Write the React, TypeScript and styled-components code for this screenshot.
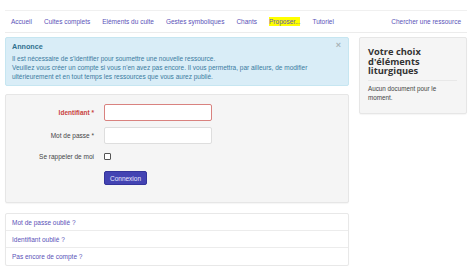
import React from "react";
import styled, { createGlobalStyle } from "styled-components";

const Global = createGlobalStyle`
  html, body { margin: 0; padding: 0; background: #fff; }
  body { font-family: "Liberation Sans", Arial, sans-serif; color: #333; }
  * { box-sizing: border-box; }
`;

const Page = styled.div`
  width: 473px;
  padding: 10px 6px 0 5px;
`;

const Nav = styled.nav`
  display: flex;
  align-items: center;
  height: 23px;
  border-top: 1px solid #f0f0f0;
  border-bottom: 1px solid #ececec;
`;

const NavItem = styled.a<{ $hl?: boolean; $right?: boolean }>`
  font-size: 6.5px;
  color: #5a52b8;
  padding: 0 6px;
  text-decoration: none;
  margin-left: ${(p) => (p.$right ? "auto" : "0")};
  span {
    background: ${(p) => (p.$hl ? "#ffff00" : "transparent")};
    padding: 1px 0;
  }
`;

const Main = styled.div`
  display: grid;
  grid-template-columns: 344px 108px;
  column-gap: 10px;
  margin-top: 4px;
  align-items: start;
`;

const Column = styled.div`
  display: flex;
  flex-direction: column;
`;

const Alert = styled.div`
  position: relative;
  background: #d9edf7;
  border: 1px solid #c6e6f1;
  border-radius: 2px;
  padding: 4px 20px 4px 6px;
  color: #3a7ba0;
  font-size: 6.5px;
  line-height: 9px;
`;

const AlertTitle = styled.div`
  font-weight: bold;
  font-size: 7.2px;
  color: #31708f;
  margin-bottom: 3px;
`;

const Close = styled.span`
  position: absolute;
  right: 7px;
  top: 3px;
  font-size: 9px;
  color: #a8b4b8;
  font-weight: bold;
`;

const Well = styled.div`
  background: #f5f5f5;
  border: 1px solid #e6e6e6;
  border-radius: 2px;
  box-shadow: 0 1px 1px rgba(0, 0, 0, 0.04);
`;

const FormWell = styled(Well)`
  margin-top: 8px;
  padding: 9px 0 17px;
  display: flex;
  flex-direction: column;
  gap: 8px;
`;

const Row = styled.div<{ $h: number }>`
  display: grid;
  grid-template-columns: 88px 108px;
  column-gap: 10px;
  align-items: center;
  height: ${(p) => p.$h}px;
`;

const Label = styled.label<{ $error?: boolean }>`
  text-align: right;
  font-size: 6.5px;
  font-weight: ${(p) => (p.$error ? "bold" : "normal")};
  color: ${(p) => (p.$error ? "#c9413d" : "#444")};
`;

const Input = styled.input<{ $error?: boolean }>`
  width: 108px;
  height: 100%;
  border: 1px solid ${(p) => (p.$error ? "#d9827f" : "#dedede")};
  border-radius: 2px;
  background: #fff;
  padding: 0;
  outline: none;
`;

const Check = styled.span`
  display: block;
  width: 7px;
  height: 7px;
  border: 1px solid #555;
  border-radius: 1px;
  background: #fff;
`;

const Button = styled.button`
  width: 43px;
  height: 14px;
  padding: 0;
  background: #4343b3;
  border: 1px solid #34349a;
  border-radius: 2px;
  color: #e8e8ff;
  font-family: "Liberation Sans", Arial, sans-serif;
  font-size: 6.5px;
`;

const List = styled.div`
  margin-top: 10px;
  border: 1px solid #e8e8e8;
  border-radius: 2px;
  box-shadow: 0 1px 1px rgba(0, 0, 0, 0.04);
`;

const ListItem = styled.a<{ $last?: boolean }>`
  display: flex;
  align-items: center;
  height: 17px;
  padding-left: 6px;
  font-size: 6.5px;
  color: #5a52b8;
  text-decoration: none;
  border-bottom: ${(p) => (p.$last ? "none" : "1px solid #ececec")};
`;

const Side = styled(Well)`
  padding: 9px 9px 11px 8px;
`;

const SideTitle = styled.div`
  font-family: "Open Sans", "Liberation Sans", sans-serif;
  font-weight: bold;
  font-size: 9.3px;
  line-height: 9.6px;
  color: #333;
  padding-bottom: 4px;
  border-bottom: 1px solid #e8e8e8;
`;

const SideText = styled.div`
  font-size: 6.3px;
  line-height: 9px;
  color: #444;
  margin-top: 3px;
`;

export default function App() {
  const items = [
    "Accueil",
    "Cultes complets",
    "Eléments du culte",
    "Gestes symboliques",
    "Chants",
  ];
  return (
    <>
      <Global />
      <Page>
        <Nav>
          {items.map((t) => (
            <NavItem key={t}>
              <span>{t}</span>
            </NavItem>
          ))}
          <NavItem $hl>
            <span>Proposer...</span>
          </NavItem>
          <NavItem>
            <span>Tutoriel</span>
          </NavItem>
          <NavItem $right>
            <span>Chercher une ressource</span>
          </NavItem>
        </Nav>
        <Main>
          <Column>
            <Alert>
              <Close>×</Close>
              <AlertTitle>Annonce</AlertTitle>
              Il est nécessaire de s'identifier pour soumettre une nouvelle ressource.
              <br />
              Veuillez vous créer un compte si vous n'en avez pas encore. Il vous permettra, par ailleurs, de modifier
              <br />
              ultérieurement et en tout temps les ressources que vous aurez publié.
            </Alert>
            <FormWell>
              <Row $h={15}>
                <Label $error>Identifiant *</Label>
                <Input $error />
              </Row>
              <Row $h={14}>
                <Label>Mot de passe *</Label>
                <Input type="password" />
              </Row>
              <Row $h={14}>
                <Label>Se rappeler de moi</Label>
                <Check />
              </Row>
              <Row $h={14}>
                <span />
                <Button>Connexion</Button>
              </Row>
            </FormWell>
            <List>
              <ListItem>Mot de passe oublié ?</ListItem>
              <ListItem>Identifiant oublié ?</ListItem>
              <ListItem $last>Pas encore de compte ?</ListItem>
            </List>
          </Column>
          <Side>
            <SideTitle>
              Votre choix d'éléments liturgiques
            </SideTitle>
            <SideText>Aucun document pour le moment.</SideText>
          </Side>
        </Main>
      </Page>
    </>
  );
}
